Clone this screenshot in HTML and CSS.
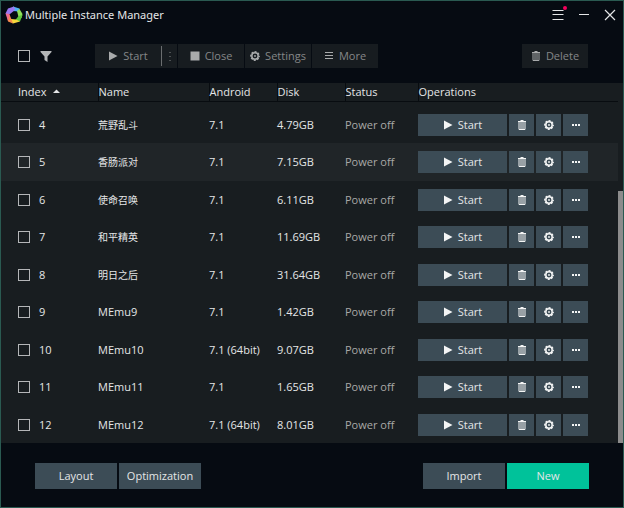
FILE: index.html
```
<!DOCTYPE html>
<html lang="en">
<head>
  <meta charset="UTF-8">
  <title>Multiple Instance Manager</title>
  <link rel="stylesheet" href="styles.css">
</head>
<body>

  <!-- shared icons -->
  <svg class="sprite" aria-hidden="true">
    <symbol id="play" viewBox="0 0 10 10"><path d="M1 0.5L9.5 5L1 9.5z" fill="currentColor"/></symbol>
    <symbol id="stop" viewBox="0 0 10 10"><path d="M0.5 0.5h9v9h-9z" fill="currentColor"/></symbol>
    <symbol id="gear" viewBox="0 0 10 10">
      <circle cx="5" cy="5" r="3.2" fill="none" stroke="currentColor" stroke-width="1.5"/>
      <circle cx="5" cy="5" r="4.2" fill="none" stroke="currentColor" stroke-width="1.4" stroke-dasharray="2.1 1.199" stroke-dashoffset="1"/>
      <circle cx="5" cy="5" r="0.9" fill="currentColor"/>
    </symbol>
    <symbol id="trash" viewBox="0 0 10 10">
      <path d="M1 1.5h8M3.5 0.5h3M2 2v7.5h6V2M4 2v7M6 2v7" fill="none" stroke="currentColor"/>
    </symbol>
    <symbol id="dots" viewBox="0 0 10 10"><path d="M1 4h2v2H1zM4 4h2v2H4zM7 4h2v2H7z" fill="currentColor"/></symbol>
    <symbol id="bars" viewBox="0 0 10 10"><path d="M1 1.5h8M1 4.5h8M1 7.5h8" stroke="currentColor"/></symbol>
  </svg>

  <div class="window">
    <header class="titlebar">
      <svg class="logo" viewBox="0 0 18 18">
        <path d="M8 0.5L14.5 2.5L15 7L11.5 5.2L7 5z" fill="#4fb0f5"/>
        <path d="M14.5 3L17.5 8L16.5 12L13.5 11L12 5z" fill="#8ee05a"/>
        <path d="M17.5 9L15 15.5L10 14.5L13.5 10z" fill="#5fc83e"/>
        <path d="M15 15.5L8 17.5L4.5 14L6 13L11 13.5z" fill="#f6d63c"/>
        <path d="M8 17.5L3 15.5L2 9L4.5 8.5L6.5 13.5z" fill="#f58a4b"/>
        <path d="M3 15L0.5 7.5L4.5 5L4.5 10z" fill="#ef6a8c"/>
        <path d="M0.5 7.5L3 2.5L9 0.5L10 4L5 8z" fill="#9a78f2"/>
      </svg>
      <h1>Multiple Instance Manager</h1>
      <div class="controls">
        <button aria-label="Menu" class="menu">
          <svg viewBox="0 0 12 12"><path d="M0.5 1.5h11M0.5 5.5h11M0.5 10.5h11" stroke="currentColor"/></svg>
          <span class="badge"></span>
        </button>
        <button aria-label="Minimize"><svg viewBox="0 0 12 12"><path d="M1 5.5h10" stroke="currentColor"/></svg></button>
        <button aria-label="Close window"><svg viewBox="0 0 12 12"><path d="M1 1l10 10M11 1L1 11" stroke="currentColor" stroke-width="1.2"/></svg></button>
      </div>
    </header>

    <div class="toolbar">
      <input type="checkbox" aria-label="Select all">
      <button class="filter" aria-label="Filter"><svg viewBox="0 0 12 12"><path d="M0.5 1h11v1L7.5 6.5V12l-3-2V6.5L0.5 2z" fill="currentColor"/></svg></button>
      <div class="tools">
        <div class="split">
          <button class="tool"><svg><use href="#play"/></svg>Start</button>
          <button class="split-more" aria-label="Start options">
            <svg viewBox="0 0 10 10"><path d="M4.5 1h1v1h-1zM4.5 5h1v1h-1zM4.5 9h1v1h-1z" fill="currentColor"/></svg>
          </button>
        </div>
        <button class="tool"><svg><use href="#stop"/></svg>Close</button>
        <button class="tool"><svg><use href="#gear"/></svg>Settings</button>
        <button class="tool"><svg><use href="#bars"/></svg>More</button>
      </div>
      <button class="tool delete"><svg><use href="#trash"/></svg>Delete</button>
    </div>

    <div class="list">
      <table>
        <thead>
          <tr>
            <th class="col-index">Index <svg class="sort" viewBox="0 0 7 4"><path d="M0 4L3.5 0.5L7 4z" fill="currentColor"/></svg></th>
            <th class="col-name">Name</th>
            <th class="col-android">Android</th>
            <th class="col-disk">Disk</th>
            <th class="col-status">Status</th>
            <th>Operations</th>
          </tr>
        </thead>
        <tbody id="rows"></tbody>
      </table>
      <div class="scrollbar"><div class="thumb"></div></div>
    </div>

    <footer class="footer">
      <button>Layout</button>
      <button>Optimization</button>
      <button class="import">Import</button>
      <button class="new">New</button>
    </footer>
  </div>

  <script src="script.js"></script>
</body>
</html>
```
FILE: styles.css
```
* { box-sizing: border-box; }
body { margin: 0; background: #060b12; color: #e4e6e7; font-family: "Open Sans", "Noto Sans CJK SC", sans-serif; font-size: 11px; line-height: 16px; }
button { display: flex; align-items: center; justify-content: center; margin: 0; padding: 0; border: none; background: none; color: inherit; font: inherit; cursor: pointer; }
svg { display: block; width: 10px; height: 10px; }
.sprite { display: none; }

.window { display: flex; flex-direction: column; min-height: 100vh; border: 1px solid #2a5a51; }

/* title bar */
.titlebar { display: flex; align-items: center; height: 27px; padding: 0 7px 0 4px; }
.logo { width: 18px; height: 18px; }
h1 { margin: 0 0 0 2px; font-family: "Noto Sans", sans-serif; font-size: 11px; font-weight: normal; }
.controls { display: flex; gap: 14px; margin-left: auto; }
.controls svg { width: 12px; height: 12px; }
.menu { position: relative; }
.badge { position: absolute; top: -3px; right: -3px; width: 4px; height: 4px; border-radius: 2px; background: #f5005c; }

/* toolbar */
.toolbar { display: flex; align-items: center; height: 55px; padding: 0 35px 0 17px; }
input { appearance: none; flex: none; width: 12px; height: 12px; margin: 0; border: 1px solid #b4b6b8; }
input:checked { background: #00c29a; }
.filter { margin-left: 10px; color: #b4b6b8; }
.filter svg { width: 12px; height: 12px; }
.tools { display: flex; gap: 1px; margin-left: 43px; }
.tool { gap: 5px; width: 66px; height: 24px; background: #171c20; color: #858788; }
.tool svg { color: #a9abac; }
.split { display: flex; background: #171c20; }
.split-more { width: 16px; height: 20px; margin: 2px 0; border-left: 1px solid #6b6e70; color: #858788; }
.delete { margin-left: auto; }

/* instance list */
.list { display: flex; background: #181d20; }
table { flex: 1; border-collapse: collapse; table-layout: fixed; }
th { height: 18px; padding: 0; border-right: 1px solid #080c10; border-bottom: 1px solid #080c10; font-weight: normal; text-align: left; }
th:last-child { border-right: none; }
td { padding: 0; }
thead::after { content: ""; display: table-row; height: 5px; }
.col-index { width: 97px; }
.col-name { width: 111px; }
.col-android { width: 68px; }
.col-disk { width: 68px; }
.col-status { width: 73px; }
th:first-child, td:first-child { padding-left: 17px; }
tbody tr { height: 37px; }
tbody tr:nth-child(even) { height: 38px; }
tbody tr.hover, tbody tr:hover { background: #202528; }
.sort { display: inline-block; width: 7px; height: 4px; margin: 0 0 3px 4px; }
.pick { display: flex; align-items: center; gap: 9px; }
:lang(zh) { font-size: 10px; }
.status { color: #a9a9a7; }
.ops { display: flex; gap: 2px; }
.ops button { gap: 5px; width: 25px; height: 22px; background: #3c4c56; }
.ops svg { color: #f4f5f5; }
.ops .start { width: 89px; }
.scrollbar { display: flex; flex-direction: column; justify-content: flex-end; width: 5px; }
.thumb { height: 70%; background: #8c8c8c; }

/* bottom buttons */
.footer { display: flex; flex: 1; gap: 2px; align-items: flex-start; padding: 20px 34px 18px; }
.footer button { width: 82px; height: 26px; background: #3c4c56; }
.footer .import { margin-left: auto; }
.footer .new { background: #00c29a; }
```
FILE: script.js
```
const instances = [
  [4, '荒野乱斗', '7.1', '4.79GB'],
  [5, '香肠派对', '7.1', '7.15GB'],
  [6, '使命召唤', '7.1', '6.11GB'],
  [7, '和平精英', '7.1', '11.69GB'],
  [8, '明日之后', '7.1', '31.64GB'],
  [9, 'MEmu9', '7.1', '1.42GB'],
  [10, 'MEmu10', '7.1 (64bit)', '9.07GB'],
  [11, 'MEmu11', '7.1', '1.65GB'],
  [12, 'MEmu12', '7.1 (64bit)', '8.01GB']
];

document.getElementById('rows').innerHTML = instances.map(([index, name, android, disk]) => `
  <tr class="${index === 5 ? 'hover' : ''}">
    <td><label class="pick"><input type="checkbox">${index}</label></td>
    <td lang="${name.startsWith('MEmu') ? 'en' : 'zh'}">${name}</td>
    <td>${android}</td>
    <td>${disk}</td>
    <td class="status">Power off</td>
    <td>
      <div class="ops">
        <button class="start"><svg><use href="#play"/></svg>Start</button>
        <button aria-label="Delete ${name}"><svg><use href="#trash"/></svg></button>
        <button aria-label="Settings for ${name}"><svg><use href="#gear"/></svg></button>
        <button aria-label="More for ${name}"><svg><use href="#dots"/></svg></button>
      </div>
    </td>
  </tr>`).join('');
```
